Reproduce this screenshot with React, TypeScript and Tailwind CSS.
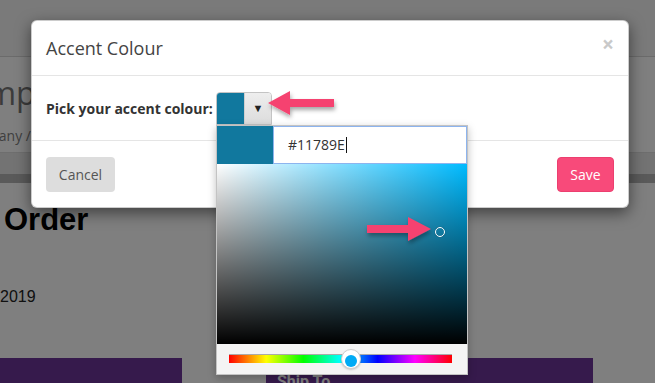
import React from "react"

const ACCENT = "#11789E"

function ColourPicker() {
  return (
    <div className="relative w-[56px] h-[33px]">
      <div className="flex h-full border border-[#c4c4c4] rounded-t-[4px] overflow-hidden">
        <div className="w-[27px] h-full" style={{ backgroundColor: ACCENT }} />
        <div className="flex-1 flex items-center justify-center bg-gradient-to-b from-[#eeeeee] to-[#dcdcdc] border-l border-[#cfcfcf]">
          <span className="text-[11px] leading-none text-[#222] mt-[-1px]">▼</span>
        </div>
      </div>

      {/* popover */}
      <div className="absolute left-0 top-full z-20 w-[252px] h-[250px] border border-[#c3c3c3] bg-[#f4f4f4] shadow-[0_3px_8px_rgba(0,0,0,0.25)] flex flex-col">
        <div className="flex h-[38px]">
          <div className="w-[56px] h-full" style={{ backgroundColor: ACCENT }} />
          <div className="flex-1 flex items-center bg-white border border-[#8db4ee] pl-[14px] text-[14px] text-[#333]">
            #11789E<span className="inline-block w-px h-[16px] bg-[#111] ml-px" />
          </div>
        </div>
        <div className="relative h-[180px] bg-[#00bbff]">
          <div className="absolute inset-0 bg-gradient-to-r from-white to-transparent" />
          <div className="absolute inset-0 bg-gradient-to-t from-black to-transparent" />
          <div className="absolute left-[218px] top-[63px] w-[10px] h-[10px] rounded-full border border-white shadow-[0_0_1px_rgba(0,0,0,0.6)]" />
        </div>
        <div className="flex-1 pt-[10px] pl-[12px]">
          <div className="relative w-[223px] h-[9px] bg-[linear-gradient(to_right,#ff0000,#ffff00,#00ff00,#00ffff,#0000ff,#ff00ff,#ff0000)] border-t border-[#aaa]">
            <div className="absolute left-[112px] top-[-6px] w-[20px] h-[20px] rounded-full bg-white border border-[#cfcfcf] shadow-[0_1px_2px_rgba(0,0,0,0.2)] flex items-end justify-center overflow-hidden">
              <div className="w-[12px] h-[12px] mb-[1px] rounded-full bg-[#00aaf5]" />
            </div>
          </div>
        </div>
      </div>
    </div>
  )
}

function Arrows() {
  return (
    <svg className="absolute inset-0 z-30 pointer-events-none" width="655" height="383" viewBox="0 0 655 383">
      <defs>
        <filter id="sh" x="-20%" y="-20%" width="140%" height="160%">
          <feDropShadow dx="1" dy="3" stdDeviation="2" floodColor="#000" floodOpacity="0.35" />
        </filter>
      </defs>
      <polygon
        filter="url(#sh)"
        fill="#f5436f"
        points="268,103 290,91 290,99 334,99 334,107 290,107 290,115"
      />
      <polygon
        filter="url(#sh)"
        fill="#f5436f"
        points="431,229 408,217 408,225 367,225 367,233 408,233 408,241"
      />
    </svg>
  )
}

export default function App() {
  return (
    <div className="relative w-[655px] h-[383px] overflow-hidden bg-white font-['Open_Sans',sans-serif]">
      {/* page behind the modal */}
      <div className="h-[57px] bg-[#f4f4f4] border-b border-[#d6d6d6]" />
      <div className="h-[96px] border-b border-[#dcdcdc] pt-[16px] overflow-hidden">
        <div className="ml-[-53px] text-[32px] leading-[40px] text-[#777] whitespace-nowrap">Company Portal</div>
        <div className="ml-[-40px] mt-[13px] text-[14px] leading-[20px] text-[#808080] whitespace-nowrap">Company / Orders</div>
      </div>
      <div className="h-[21px] bg-[#e6e6e6]" />
      <div className="h-[9px] bg-[#b4b4b4]" />
      <div className="font-['Liberation_Sans',Arial,sans-serif]">
        <div className="mt-[19px] ml-[4px] text-[31px] leading-[36px] font-bold text-black">Order</div>
        <div className="mt-[49px] text-[16px] leading-[20px] text-[#222]">2019</div>
        <div className="mt-[51px] flex">
          <div className="w-[182px] h-[40px] bg-[#6c3498]" />
          <div className="ml-[84px] w-[327px] h-[40px] bg-[#6c3498] pt-[14px] pl-[11px] text-[16px] leading-[20px] font-bold text-white font-['Roboto',sans-serif]">
            Ship To
          </div>
        </div>
      </div>

      {/* backdrop + modal */}
      <div className="absolute inset-0 bg-black/50 pt-[20px] pl-[31px]">
        <div className="w-[598px] bg-white rounded-[6px] border border-black/20 shadow-[0_5px_15px_rgba(0,0,0,0.5)]">
          <div className="h-[55px] flex items-center justify-between px-[14px] border-b border-[#e5e5e5]">
            <h4 className="text-[18px] text-[#444]">Accent Colour</h4>
            <span className="text-[21px] font-bold leading-none text-[#c9c9c9] mt-[-8px]">×</span>
          </div>
          <div className="h-[65px] flex items-center px-[14px] border-b border-[#e5e5e5]">
            <label className="w-[170px] text-[14px] font-bold text-[#333]">Pick your accent colour:</label>
            <ColourPicker />
          </div>
          <div className="h-[66px] flex items-center justify-between px-[14px]">
            <button className="w-[69px] h-[35px] rounded-[4px] bg-[#dddddd] text-[14px] text-[#555]">Cancel</button>
            <button className="w-[57px] h-[35px] rounded-[4px] bg-[#f84a7a] border border-[#ec3f6f] text-[14px] text-white">Save</button>
          </div>
        </div>
      </div>

      <Arrows />
    </div>
  )
}
